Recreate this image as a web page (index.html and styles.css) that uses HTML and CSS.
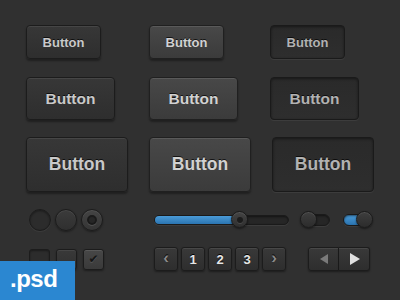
FILE: index.html
```html
<!DOCTYPE html>
<html>
<head>
<meta charset="utf-8">
<link rel="stylesheet" href="styles.css">
</head>
<body>
<div class="page">
  <div class="btn-row r1">
    <div class="cell c1"><button class="btn a s1">Button</button></div>
    <div class="cell c2"><button class="btn b s1">Button</button></div>
    <div class="cell"><button class="btn c s1">Button</button></div>
  </div>
  <div class="btn-row r2">
    <div class="cell c1"><button class="btn a s2">Button</button></div>
    <div class="cell c2"><button class="btn b s2">Button</button></div>
    <div class="cell"><button class="btn c s2">Button</button></div>
  </div>
  <div class="btn-row r3">
    <div class="cell c1"><button class="btn a s3">Button</button></div>
    <div class="cell c2"><button class="btn b s3">Button</button></div>
    <div class="cell c3"><button class="btn c s3">Button</button></div>
  </div>

  <div class="ctl-row r4">
    <div class="grp-a radios">
      <span class="radio"></span>
      <span class="radio hover"></span>
      <span class="radio on"><span class="dot"></span></span>
    </div>
    <div class="grp-b slider">
      <div class="track"><div class="fill"></div></div>
      <span class="knob"><span class="kdot"></span></span>
    </div>
    <div class="grp-c toggles">
      <div class="toggle off"><span class="ttrack"></span><span class="tknob"></span></div>
      <div class="toggle on"><span class="ttrack"></span><span class="tknob"></span></div>
    </div>
  </div>

  <div class="ctl-row r5">
    <div class="grp-a checks">
      <span class="check"></span>
      <span class="check"></span>
      <span class="check on">✔</span>
    </div>
    <div class="grp-b pager">
      <span class="pg arrow">‹</span>
      <span class="pg">1</span>
      <span class="pg">2</span>
      <span class="pg">3</span>
      <span class="pg arrow">›</span>
    </div>
    <div class="grp-c nav">
      <span class="nv left"><span class="tri-l"></span></span>
      <span class="nv right"><span class="tri-r"></span></span>
    </div>
  </div>
</div>
<div class="psd">.psd</div>
</body>
</html>
```

FILE: styles.css
```css
html, body {
  margin: 0;
  padding: 0;
}
body {
  width: 400px;
  height: 300px;
  overflow: hidden;
  background: #303030;
  font-family: "Liberation Sans", Arial, sans-serif;
  position: relative;
}
.page {
  padding: 25px 0 0 26px;
}
.btn-row {
  display: flex;
  align-items: flex-start;
}
.r2 { margin-top: 18px; }
.r3 { margin-top: 17px; }
.cell.c1 { width: 123px; }
.cell.c2 { width: 121px; }
.cell.c3 { padding-left: 2px; }

.btn {
  display: block;
  box-sizing: border-box;
  font-family: "Liberation Sans", Arial, sans-serif;
  font-weight: bold;
  border-radius: 4px;
  padding: 0;
  margin: 0;
  text-shadow: 0 -1px 0 rgba(0,0,0,0.7);
}
.s1 { width: 75px; height: 34px; font-size: 13px; }
.s2 { width: 89px; height: 43px; font-size: 15.5px; }
.s3 { width: 102px; height: 55px; font-size: 17.5px; }

.btn.a {
  color: #c9c9c9;
  background: linear-gradient(#373737, #2e2e2e);
  border: 1px solid #1c1c1c;
  box-shadow: inset 0 1px 0 rgba(255,255,255,0.08), 0 2px 2px rgba(0,0,0,0.35);
}
.btn.b {
  color: #d2d2d2;
  background: linear-gradient(#484848, #3b3b3b);
  border: 1px solid #202020;
  box-shadow: inset 0 1px 0 rgba(255,255,255,0.1), 0 2px 2px rgba(0,0,0,0.35);
}
.btn.c {
  color: #b2b2b2;
  background: linear-gradient(#2a2a2a, #2e2e2e);
  border: 1px solid #1a1a1a;
  box-shadow: inset 0 1px 3px rgba(0,0,0,0.45), 0 1px 0 rgba(255,255,255,0.06);
}

.ctl-row {
  display: flex;
  align-items: center;
  padding-left: 3px;
}
.r4 { margin-top: 17px; height: 22px; }
.r5 { margin-top: 16px; height: 24px; }
.grp-a { width: 125px; display: flex; gap: 4px; align-items: center; }
.grp-b { width: 146px; display: flex; align-items: center; }
.grp-c { display: flex; align-items: center; }

/* radios */
.radio {
  width: 22px;
  height: 22px;
  box-sizing: border-box;
  border-radius: 50%;
  border: 1px solid #1c1c1c;
  background: #2c2c2c;
  box-shadow: inset 0 1px 2px rgba(0,0,0,0.4), 0 1px 0 rgba(255,255,255,0.05);
  display: flex;
  align-items: center;
  justify-content: center;
}
.radio.hover {
  background: linear-gradient(#3b3b3b, #2f2f2f);
  box-shadow: inset 0 1px 0 rgba(255,255,255,0.08), 0 1px 2px rgba(0,0,0,0.4);
}
.radio.on {
  background: linear-gradient(#444, #353535);
  box-shadow: inset 0 1px 0 rgba(255,255,255,0.08), 0 1px 2px rgba(0,0,0,0.4);
}
.radio .dot {
  width: 10px;
  height: 10px;
  box-sizing: border-box;
  border-radius: 50%;
  background: #262626;
  border: 2px solid #1a1a1a;
  box-shadow: 0 1px 0 rgba(255,255,255,0.12);
}

/* checkboxes */
.checks { gap: 6px; }
.check {
  width: 21px;
  height: 21px;
  box-sizing: border-box;
  border-radius: 3px;
  border: 1px solid #1c1c1c;
  background: #2c2c2c;
  box-shadow: inset 0 1px 2px rgba(0,0,0,0.4);
  color: #161616;
  font-size: 12px;
  font-family: "DejaVu Sans", sans-serif;
  display: flex;
  align-items: center;
  justify-content: center;
  text-shadow: 0 1px 0 rgba(255,255,255,0.12);
}
.check:nth-child(2) {
  background: linear-gradient(#393939, #303030);
  box-shadow: inset 0 1px 0 rgba(255,255,255,0.07), 0 1px 2px rgba(0,0,0,0.35);
}
.check.on {
  background: linear-gradient(#474747, #3a3a3a);
  box-shadow: inset 0 1px 0 rgba(255,255,255,0.1), 0 1px 2px rgba(0,0,0,0.4);
}

/* slider */
.slider {
  position: relative;
  padding-left: 0;
}
.track {
  margin-left: 0;
  width: 135px;
  height: 10px;
  box-sizing: border-box;
  border-radius: 5px;
  background: #262626;
  border: 1px solid #1a1a1a;
  box-shadow: inset 0 1px 2px rgba(0,0,0,0.5), 0 1px 0 rgba(255,255,255,0.06);
  overflow: hidden;
}
.fill {
  width: 80px;
  height: 100%;
  background: linear-gradient(#4a9bd8, #2b74b0);
}
.knob {
  position: absolute;
  left: 77px;
  top: 50%;
  margin-top: -9px;
  width: 17px;
  height: 17px;
  box-sizing: border-box;
  border-radius: 50%;
  border: 1px solid #1a1a1a;
  background: linear-gradient(#444, #2f2f2f);
  box-shadow: inset 0 1px 0 rgba(255,255,255,0.1), 0 1px 2px rgba(0,0,0,0.5);
  display: flex;
  align-items: center;
  justify-content: center;
}
.kdot {
  width: 6px;
  height: 6px;
  border-radius: 50%;
  background: #1c1c1c;
  box-shadow: 0 1px 0 rgba(255,255,255,0.1);
}

/* toggles */
.toggles { gap: 13px; }
.toggle {
  position: relative;
  width: 30px;
  height: 18px;
}
.ttrack {
  position: absolute;
  left: 2px;
  right: 0;
  top: 3px;
  height: 12px;
  box-sizing: border-box;
  border-radius: 6px;
  background: #262626;
  border: 1px solid #1a1a1a;
  box-shadow: inset 0 1px 2px rgba(0,0,0,0.5), 0 1px 0 rgba(255,255,255,0.06);
}
.tknob {
  position: absolute;
  top: 0;
  left: 0;
  width: 17px;
  height: 17px;
  box-sizing: border-box;
  border-radius: 50%;
  border: 1px solid #1a1a1a;
  background: linear-gradient(#3e3e3e, #2c2c2c);
  box-shadow: inset 0 1px 0 rgba(255,255,255,0.1), 0 1px 2px rgba(0,0,0,0.5);
}
.toggle.on .ttrack {
  background: linear-gradient(#4a9bd8, #2b74b0);
  left: 0;
  right: 6px;
}
.toggle.on .tknob {
  left: auto;
  right: 0;
}

/* pager */
.pager { gap: 3px; }
.pg, .nv {
  box-sizing: border-box;
  height: 24px;
  border: 1px solid #1c1c1c;
  background: linear-gradient(#393939, #2e2e2e);
  box-shadow: inset 0 1px 0 rgba(255,255,255,0.08), 0 1px 2px rgba(0,0,0,0.4);
  display: flex;
  align-items: center;
  justify-content: center;
}
.pg {
  width: 24px;
  border-radius: 3px;
  color: #e6e6e6;
  font-weight: bold;
  font-size: 13px;
  text-shadow: 0 -1px 0 #000;
}
.pg.arrow {
  color: #8a8a8a;
  font-size: 17px;
  padding-bottom: 2px;
}

.nav { margin-left: 8px; }
.nv { width: 31px; }
.nv.left {
  border-radius: 3px 0 0 3px;
  width: 31px;
}
.nv.right {
  border-radius: 0 3px 3px 0;
  border-left: none;
  width: 31px;
}
.tri-l {
  width: 0; height: 0;
  border-top: 5px solid transparent;
  border-bottom: 5px solid transparent;
  border-right: 8px solid #7a7a7a;
}
.tri-r {
  width: 0; height: 0;
  border-top: 6px solid transparent;
  border-bottom: 6px solid transparent;
  border-left: 10px solid #e0e0e0;
  margin-left: 2px;
}

.psd {
  position: absolute;
  left: 0;
  bottom: 0;
  width: 75px;
  height: 39px;
  background: #2b87d1;
  color: #fff;
  font-weight: bold;
  font-size: 24px;
  letter-spacing: -0.5px;
  box-sizing: border-box;
  padding: 3px 0 0 10px;
  line-height: 30px;
}
```
